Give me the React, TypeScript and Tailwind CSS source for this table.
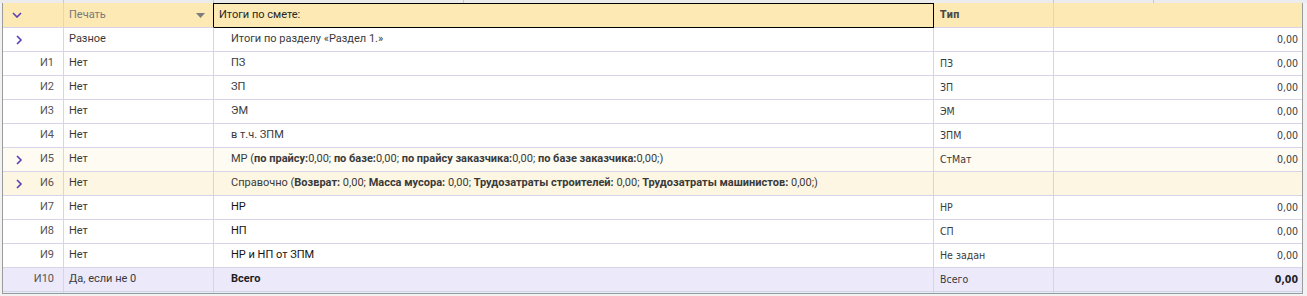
import React from "react";

type Row = {
  chev?: boolean;
  id: string;
  print: string;
  name: React.ReactNode;
  type: string;
  val: string;
  bg?: string;
  bold?: boolean;
  dark?: boolean;
};

const B = ({ children }: { children: React.ReactNode }) => <span className="font-bold">{children}</span>;

const rows: Row[] = [
  { chev: true, id: "", print: "Разное", name: "Итоги по разделу «Раздел 1.»", type: "", val: "0,00" },
  { id: "И1", print: "Нет", name: "ПЗ", type: "ПЗ", val: "0,00" },
  { id: "И2", print: "Нет", name: "ЗП", type: "ЗП", val: "0,00" },
  { id: "И3", print: "Нет", name: "ЭМ", type: "ЭМ", val: "0,00" },
  { id: "И4", print: "Нет", name: "в т.ч. ЗПМ", type: "ЗПМ", val: "0,00" },
  {
    chev: true,
    id: "И5",
    print: "Нет",
    name: (
      <>
        МР (<B>по прайсу:</B>0,00; <B>по базе:</B>0,00; <B>по прайсу заказчика:</B>0,00; <B>по базе заказчика:</B>0,00;)
      </>
    ),
    type: "СтМат",
    val: "0,00",
    bg: "bg-[#fefbf3]",
  },
  {
    chev: true,
    id: "И6",
    print: "Нет",
    name: (
      <>
        Справочно (<B>Возврат:</B> 0,00; <B>Масса мусора:</B> 0,00; <B>Трудозатраты строителей:</B> 0,00;{" "}
        <B>Трудозатраты машинистов:</B> 0,00;)
      </>
    ),
    type: "",
    val: "",
    bg: "bg-[#fdf6e2]",
  },
  { id: "И7", print: "Нет", name: "НР", type: "НР", val: "0,00", dark: true },
  { id: "И8", print: "Нет", name: "НП", type: "СП", val: "0,00", dark: true },
  { id: "И9", print: "Нет", name: "НР и НП от ЗПМ", type: "Не задан", val: "0,00", dark: true },
  { id: "И10", print: "Да, если не 0", name: "Всего", type: "Всего", val: "0,00", bg: "bg-[#ece9fb]", bold: true },
];

const ChevRight = () => (
  <svg width="8" height="10" viewBox="0 0 8 10" className="block">
    <polyline points="2,1 6,5 2,9" fill="none" stroke="#5b3db5" strokeWidth="1.6" />
  </svg>
);

const ChevDown = () => (
  <svg width="10" height="6" viewBox="0 0 10 6" className="block">
    <polyline points="1,1 5,5 9,1" fill="none" stroke="#5b3db5" strokeWidth="1.6" />
  </svg>
);

const cols = "grid grid-cols-[61px_150px_720px_120px_248px]";
const line = "border-[#d8d3e8]";
const roboto = "font-['Roboto',sans-serif] text-[11px]";
const tahoma = "font-['DejaVu_Sans_Condensed','Liberation_Sans',sans-serif] text-[10.5px]";

export default function App() {
  return (
    <div className="w-[1307px] h-[296px] bg-[#f2f2f2] overflow-hidden">
      {/* clipped strip of element above */}
      <div className="flex h-[3px] bg-[#ececec]">
        <div className="w-[64px] border-r border-[#c9c9c9]" />
        <div className="w-[150px] border-r border-[#c9c9c9]" />
        <div className="w-[250px] border-r border-[#c9c9c9]" />
        <div className="w-[590px] border-r border-[#c9c9c9]" />
        <div className="w-[100px] border-r border-[#c9c9c9]" />
        <div className="flex-1" />
      </div>
      <div className="ml-[2px] w-[1301px] border-l border-r border-b border-[#9b9b9b] bg-white">
        {/* header */}
        <div className={`${cols} h-[25px] bg-[#fce9b4]`}>
          <div className={`flex items-center pl-[9px] border-r border-b ${line}`}>
            <ChevDown />
          </div>
          <div className={`flex items-center justify-between pl-[5px] pr-[8px] border-r border-b border-r-black ${line} ${roboto} text-[#787878]`}>
            <span>Печать</span>
            <svg width="9" height="5" viewBox="0 0 9 5" className="block">
              <polygon points="0,0 9,0 4.5,5" fill="#7d7d7d" />
            </svg>
          </div>
          <div className={`flex items-center pl-[5px] border-t border-r border-b border-black ${roboto} text-[#262626]`}>
            <span>Итоги по смете:</span>
          </div>
          <div className={`flex items-center pl-[6px] border-r border-b ${line} ${tahoma} font-bold text-[#4a4a4a]`}>
            <span>Тип</span>
          </div>
          <div className={`border-b ${line}`} />
        </div>
        {/* body */}
        {rows.map((r, i) => (
          <div key={i} className={`${cols} h-[24px] ${r.bg ?? "bg-white"}`}>
            <div className={`flex items-center justify-between pl-[12px] pr-[9px] border-r border-b ${line} ${roboto} text-[#555555]`}>
              <span>{r.chev ? <ChevRight /> : null}</span>
              <span>{r.id}</span>
            </div>
            <div className={`flex items-center pl-[5px] border-r border-b ${line} ${roboto} text-[#3a3a3a]`}>
              <span>{r.print}</span>
            </div>
            <div
              className={`flex items-center pl-[17px] border-r border-b ${line} ${roboto} whitespace-nowrap ${
                r.bold ? "font-bold text-[#1e1e1e]" : r.dark ? "text-[#141414]" : "text-[#3a3a3a]"
              }`}
            >
              <span className="whitespace-pre">{r.name}</span>
            </div>
            <div className={`flex items-center pl-[6px] border-r border-b ${line} ${tahoma} text-[#3a3a3a]`}>
              <span>{r.type}</span>
            </div>
            <div
              className={`flex items-center justify-end pr-[4px] border-b ${line} ${tahoma} ${
                r.bold ? "font-bold text-[#222222]" : "text-[#3a3a3a]"
              }`}
            >
              <span>{r.val}</span>
            </div>
          </div>
        ))}
        {/* clipped next row */}
        <div className={`${cols} h-[1px] bg-[#dff0fa]`}>
          <div className={`border-r ${line}`} />
          <div className={`border-r ${line}`} />
          <div className={`border-r ${line}`} />
          <div className={`border-r ${line}`} />
          <div />
        </div>
      </div>
    </div>
  );
}
